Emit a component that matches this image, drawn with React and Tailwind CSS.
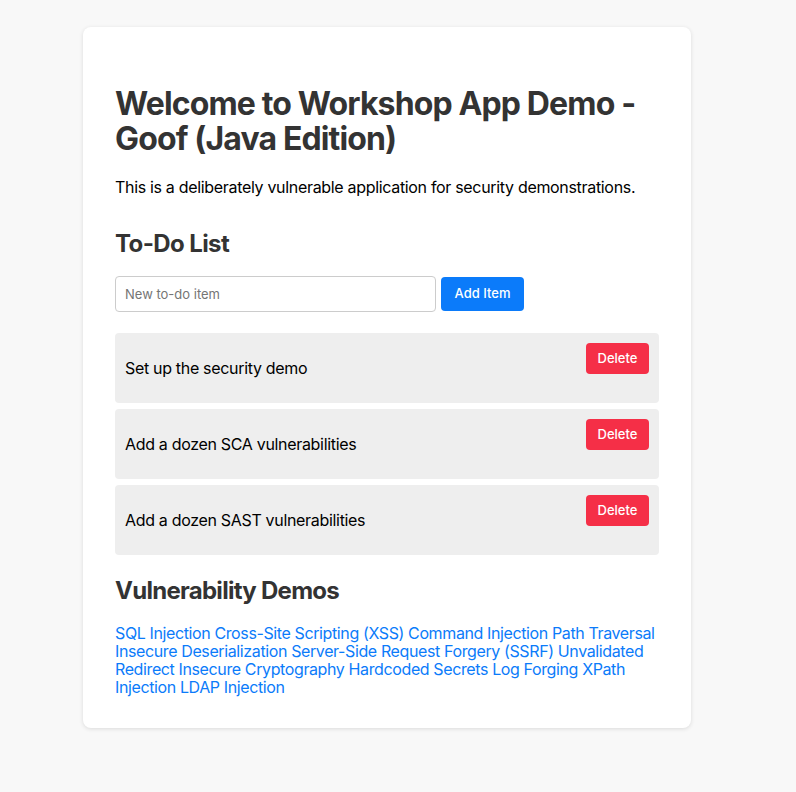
import { useState } from 'react';

const initialTodos = [
  'Set up the security demo',
  'Add a dozen SCA vulnerabilities',
  'Add a dozen SAST vulnerabilities',
];

const demos = [
  'SQL Injection',
  'Cross-Site Scripting (XSS)',
  'Command Injection',
  'Path Traversal',
  'Insecure Deserialization',
  'Server-Side Request Forgery (SSRF)',
  'Unvalidated Redirect',
  'Insecure Cryptography',
  'Hardcoded Secrets',
  'Log Forging',
  'XPath Injection',
  'LDAP Injection',
];

export default function App() {
  const [todos, setTodos] = useState(initialTodos);
  const [text, setText] = useState('');

  const add = (e) => {
    e.preventDefault();
    if (!text.trim()) return;
    setTodos((t) => [...t, text.trim()]);
    setText('');
  };

  return (
    <div className="min-h-[792px] bg-[#f8f8f8] pt-[27px] pl-[83px] font-['Inter',sans-serif] tracking-[-0.02em] text-black">
      <div className="w-[608px] rounded-lg bg-white p-8 shadow-[0_1px_4px_rgba(0,0,0,0.12)]">
        <h1 className="mt-[27px] mb-[22px] text-[32px] leading-[35px] font-bold tracking-[-0.027em] text-[#333]">
          Welcome to Workshop App Demo - Goof (Java Edition)
        </h1>
        <p className="mb-4 text-base leading-[19px]">This is a deliberately vulnerable application for security demonstrations.</p>

        <h2 className="mt-[32px] mb-[18px] text-2xl leading-[29px] font-bold tracking-[-0.025em] text-[#333]">To-Do List</h2>
        <form onSubmit={add} className="mb-[21px] flex items-center gap-[5px]">
          <input
            value={text}
            onChange={(e) => setText(e.target.value)}
            placeholder="New to-do item"
            className="h-9 w-[321px] rounded border border-[#ccc] px-[9px] text-[13px] tracking-normal outline-none placeholder:text-[#757575]"
          />
          <button type="submit" className="h-[34px] w-[83px] rounded bg-[#0b7bfa] text-[13px] font-medium tracking-normal text-white">
            Add Item
          </button>
        </form>

        <ul className="flex flex-col gap-[6px]">
          {todos.map((t, i) => (
            <li key={i} className="flex h-[70px] items-center justify-between rounded bg-[#eeeeee] px-[10px]">
              <span className="text-base">{t}</span>
              <button
                onClick={() => setTodos((all) => all.filter((_, j) => j !== i))}
                className="mt-[10px] h-[31px] w-[63px] self-start rounded bg-[#f52f47] text-[13px] font-medium tracking-normal text-white"
              >
                Delete
              </button>
            </li>
          ))}
        </ul>

        <h2 className="mt-[21px] mb-[19px] text-2xl leading-[29px] font-bold tracking-[-0.03em] text-[#333]">Vulnerability Demos</h2>
        <div className="text-base leading-[18px] tracking-[-0.024em] text-[#0b7bfa]">
          {demos.map((d, i) => (
            <span key={d}>
              <a href="#" className="hover:underline">{d}</a>
              {i < demos.length - 1 ? ' ' : ''}
            </span>
          ))}
        </div>
      </div>
    </div>
  );
}
